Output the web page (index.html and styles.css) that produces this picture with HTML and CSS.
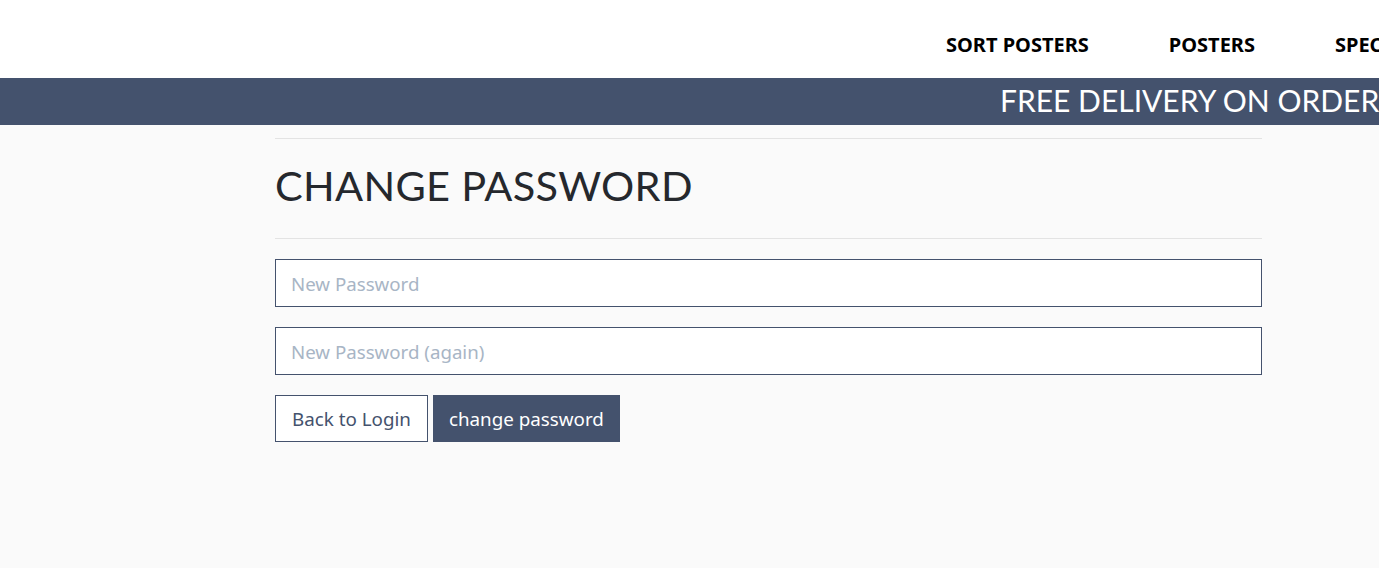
FILE: index.html
```html
<!DOCTYPE html>
<html lang="en">
<head>
<meta charset="utf-8">
<title>Change Password</title>
<link rel="stylesheet" href="styles.css">
</head>
<body>
<header class="topbar">
  <nav class="mainnav">
    <a class="navlink" href="#">SORT POSTERS</a>
    <a class="navlink" href="#">POSTERS</a>
    <a class="navlink" href="#">SPECIAL OFFERS</a>
  </nav>
</header>
<div class="banner">
  <span class="banner-text">FREE DELIVERY ON ORDERS OVER £50</span>
</div>
<main class="content">
  <hr class="rule">
  <h1 class="title">CHANGE PASSWORD</h1>
  <hr class="rule">
  <form class="pwform">
    <input class="field" type="password" placeholder="New Password">
    <input class="field" type="password" placeholder="New Password (again)">
    <div class="actions">
      <a class="btn btn-outline" href="#">Back to Login</a>
      <button class="btn btn-primary" type="button">change password</button>
    </div>
  </form>
</main>
</body>
</html>
```
FILE: styles.css
```css
html, body {
  margin: 0;
  padding: 0;
  background: #fafafa;
  overflow-x: hidden;
}
body {
  font-family: "Noto Sans", "Open Sans", sans-serif;
  width: 1379px;
}
.topbar {
  box-sizing: border-box;
  height: 78px;
  padding-top: 10px;
  background: #ffffff;
  display: flex;
  align-items: center;
  overflow: hidden;
}
.mainnav {
  display: flex;
  margin-left: 906px;
  white-space: nowrap;
}
.navlink {
  font-family: "Noto Sans", sans-serif;
  font-weight: 700;
  font-size: 20px;
  color: #000;
  text-decoration: none;
  padding: 0 40px;
}
.banner {
  box-sizing: border-box;
  height: 47px;
  padding-bottom: 4px;
  background: #44526d;
  display: flex;
  align-items: center;
  overflow: hidden;
  white-space: nowrap;
}
.banner-text {
  margin-left: 1000px;
  color: #ffffff;
  font-family: "Lato", sans-serif;
  font-size: 30px;
  font-weight: 400;
}
.content {
  margin-left: 275px;
  width: 987px;
  padding-top: 13px;
}
.rule {
  border: 0;
  border-top: 1px solid #e3e3e3;
  margin: 0;
}
.title {
  box-sizing: border-box;
  font-family: "Lato", sans-serif;
  font-weight: 400;
  font-size: 41.5px;
  color: #25282d;
  margin: 0;
  height: 99px;
  padding-bottom: 8px;
  display: flex;
  align-items: center;
  letter-spacing: 0.3px;
}
.pwform {
  display: flex;
  flex-direction: column;
  gap: 20px;
  padding-top: 20px;
}
.field {
  box-sizing: border-box;
  height: 48px;
  width: 100%;
  border: 1px solid #44526d;
  border-radius: 0;
  background: #fff;
  padding: 0 15px;
  font-family: "Noto Sans", sans-serif;
  font-size: 18.7px;
  color: #44526d;
  outline: none;
}
.field::placeholder {
  color: #a8b5c5;
}
.actions {
  display: flex;
  gap: 5px;
}
.btn {
  box-sizing: border-box;
  height: 47px;
  display: inline-flex;
  align-items: center;
  padding: 0 16px;
  font-family: "Noto Sans", sans-serif;
  font-size: 18.8px;
  border: 1px solid #44526d;
  border-radius: 0;
  text-decoration: none;
  cursor: pointer;
}
.btn-outline {
  background: #fff;
  color: #44526d;
}
.btn-primary {
  background: #44526d;
  color: #fff;
  padding: 0 15px;
}
```
